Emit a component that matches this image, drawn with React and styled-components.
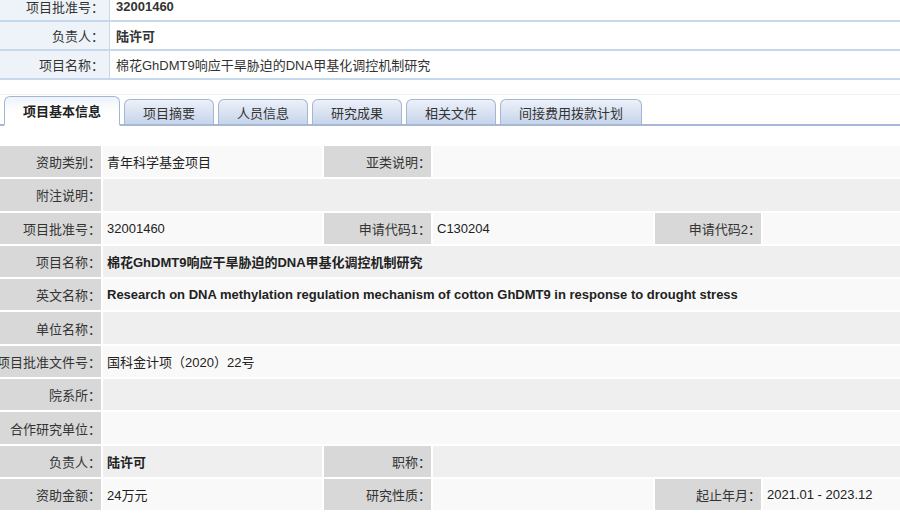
import React from "react";
import styled, { createGlobalStyle, css } from "styled-components";

const Global = createGlobalStyle`
  html, body { margin: 0; padding: 0; background: #fff; overflow: hidden; }
  body { font-family: "Liberation Sans", "Noto Sans CJK SC", sans-serif; color: #333; font-size: 13px; }
`;

const Page = styled.div`
  width: 900px;
  margin-top: -7px;
`;

const HeadTable = styled.div`
  display: grid;
  grid-template-columns: 110px 1fr;
`;

const HeadLabel = styled.div`
  height: 27px;
  display: flex;
  align-items: center;
  justify-content: flex-end;
  padding-right: 5px;
  background: #eef3f9;
  border-right: 1px solid #c6d8ec;
  border-bottom: 2px solid #c6d8ec;
  white-space: nowrap;
`;

const HeadValue = styled.div`
  height: 27px;
  display: flex;
  align-items: center;
  padding-left: 6px;
  background: #fff;
  border-bottom: 2px solid #c6d8ec;
  font-weight: ${(p) => (p.$bold ? 700 : 400)};
  white-space: nowrap;
`;

const TabBar = styled.div`
  margin-top: 14px;
  height: 29px;
  display: flex;
  align-items: flex-end;
  gap: 4px;
  padding-left: 4px;
  border-top: 1px solid #f0f3f8;
  border-bottom: 2px solid #a6b8d6;
`;

const Tab = styled.div`
  width: ${(p) => p.$w}px;
  box-sizing: border-box;
  height: 27px;
  margin-bottom: -2px;
  display: flex;
  align-items: center;
  justify-content: center;
  border: 1px solid #a3b6d6;
  border-bottom: 2px solid #a6b8d6;
  border-radius: 6px 6px 0 0;
  background: linear-gradient(#ecf1f9, #c6d4ea);
  color: #333;
  white-space: nowrap;
  ${(p) =>
    p.$active &&
    css`
      height: 30px;
      border-bottom: 2px solid #fff;
      background: linear-gradient(#eef3fa, #ffffff 60%);
      font-weight: 700;
      color: #222;
    `}
`;

const Grid = styled.div`
  margin-top: 20px;
  display: grid;
  grid-template-columns: 101px 219px 107px 220px 106px 1fr;
  grid-auto-rows: 31.3px;
  gap: 2px;
`;

const Label = styled.div`
  background: #d8d8d8;
  display: flex;
  align-items: center;
  justify-content: flex-end;
  padding-right: 0;
  white-space: nowrap;
  color: #333;
`;

const Value = styled.div`
  grid-column: span ${(p) => p.$span || 1};
  background: ${(p) => (p.$alt ? "#efefef" : "#f9f9f9")};
  display: flex;
  align-items: center;
  padding-left: 4px;
  white-space: nowrap;
  font-weight: ${(p) => (p.$bold ? 700 : 400)};
  color: #222;
`;

const tabs = [
  ["项目基本信息", 116, true],
  ["项目摘要", 90],
  ["人员信息", 90],
  ["研究成果", 90],
  ["相关文件", 90],
  ["间接费用拨款计划", 142],
];

export default function App() {
  return (
    <Page>
      <Global />
      <HeadTable>
        <HeadLabel>项目批准号：</HeadLabel>
        <HeadValue $bold>32001460</HeadValue>
        <HeadLabel>负责人：</HeadLabel>
        <HeadValue $bold>陆许可</HeadValue>
        <HeadLabel>项目名称：</HeadLabel>
        <HeadValue>棉花GhDMT9响应干旱胁迫的DNA甲基化调控机制研究</HeadValue>
      </HeadTable>

      <TabBar>
        {tabs.map(([t, w, a]) => (
          <Tab key={t} $w={w} $active={a}>
            {t}
          </Tab>
        ))}
      </TabBar>

      <Grid>
        <Label>资助类别：</Label>
        <Value>青年科学基金项目</Value>
        <Label>亚类说明：</Label>
        <Value $span={3} />

        <Label>附注说明：</Label>
        <Value $span={5} $alt />

        <Label>项目批准号：</Label>
        <Value>32001460</Value>
        <Label>申请代码1：</Label>
        <Value>C130204</Value>
        <Label>申请代码2：</Label>
        <Value />

        <Label>项目名称：</Label>
        <Value $span={5} $alt $bold>
          棉花GhDMT9响应干旱胁迫的DNA甲基化调控机制研究
        </Value>

        <Label>英文名称：</Label>
        <Value $span={5} $bold>
          Research on DNA methylation regulation mechanism of cotton GhDMT9 in response to drought stress
        </Value>

        <Label>单位名称：</Label>
        <Value $span={5} $alt />

        <Label>项目批准文件号：</Label>
        <Value $span={5}>国科金计项（2020）22号</Value>

        <Label>院系所：</Label>
        <Value $span={5} $alt />

        <Label>合作研究单位：</Label>
        <Value $span={5} />

        <Label>负责人：</Label>
        <Value $alt $bold>陆许可</Value>
        <Label>职称：</Label>
        <Value $span={3} $alt />

        <Label>资助金额：</Label>
        <Value>24万元</Value>
        <Label>研究性质：</Label>
        <Value />
        <Label>起止年月：</Label>
        <Value>2021.01 - 2023.12</Value>
      </Grid>
    </Page>
  );
}
